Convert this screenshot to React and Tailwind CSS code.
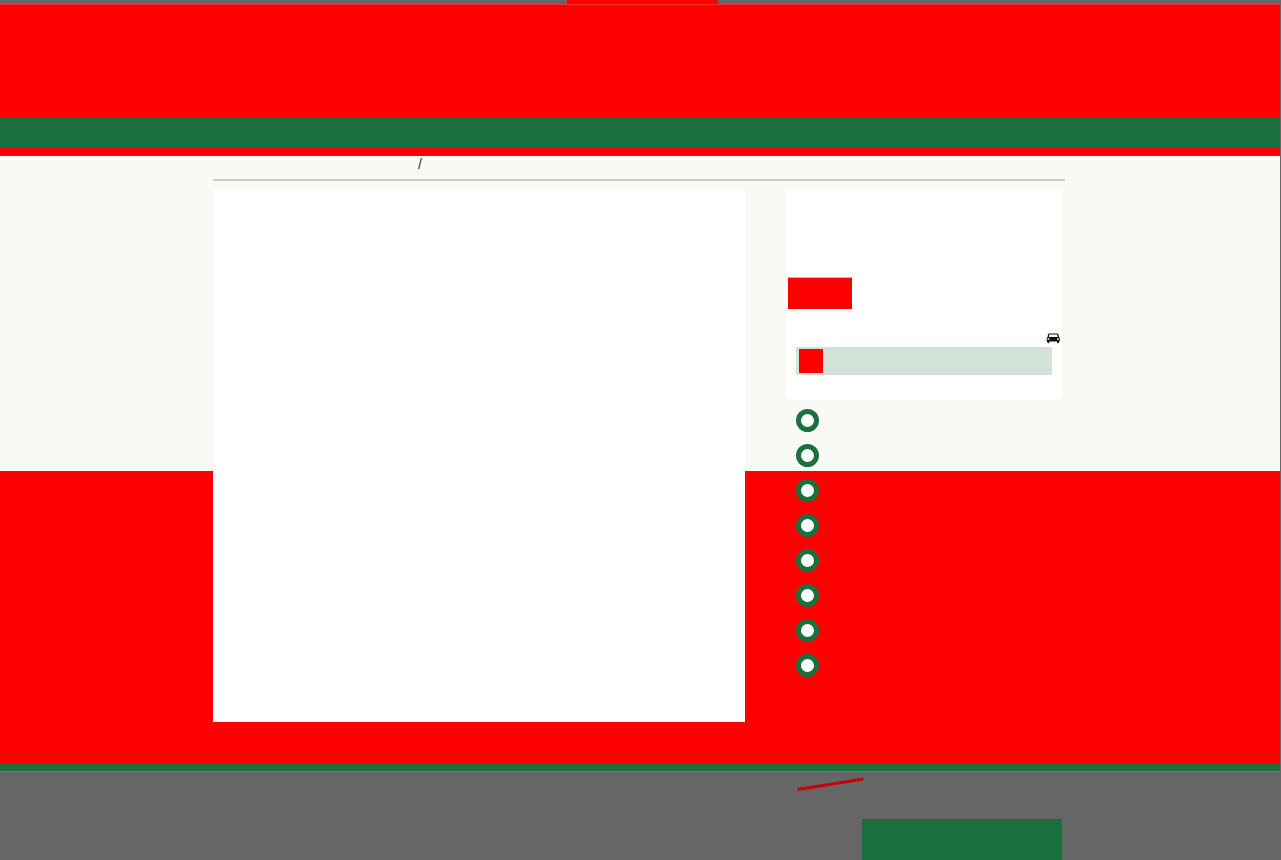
const steps = [1, 2, 3, 4, 5, 6, 7, 8];

function CarIcon() {
  return (
    <svg className="block h-[11px] w-[14px]" viewBox="0 0 14 11" aria-hidden="true">
      <path
        fillRule="evenodd"
        fill="#111"
        d="M3.2 0.5H11Q12.3 0.5 12.5 1.6L12.9 4Q13.8 4.5 13.8 5.4V8.2H13.2V9.2Q13 10.2 12 10.2Q11 10.1 11 9.2V8.4H3.4V9.2Q3.4 10.1 2.4 10.2Q1.4 10.2 1.2 9.2V8.2H0.7V5.4Q0.7 4.5 1.6 4L2 1.6Q2.2 0.5 3.2 0.5ZM3.2 1.6L2.9 4H11.6L11.2 1.6ZM1.6 5.2V6.8H3.4V5.2ZM11.1 5.2V6.8H12.9V5.2Z"
      />
    </svg>
  );
}

function Header() {
  return (
    <header className="bg-[#ff0000] pb-2">
      <div className="flex h-1 bg-[#666666] pl-1">
        <div className="mx-auto w-[151px] bg-[#ff0000]" />
      </div>
      <div className="h-px bg-[#ff3030]" />
      <div className="h-[113px]" />
      <nav className="h-[30px] bg-[#1a713f]" aria-label="Main" />
    </header>
  );
}

function Sidebar() {
  return (
    <aside className="w-[276px] shrink-0">
      <div className="bg-white pt-[86px] pb-6">
        <button type="button" aria-label="Search" className="ml-0.5 block h-8 w-16 border-t border-[#ff9999] bg-[#ff0000]" />
        <div className="mt-6 flex justify-end pr-0.5">
          <CarIcon />
        </div>
        <div className="mx-2.5 mt-[3px] flex h-7 items-center bg-[#d2e2d9] px-[3px]">
          <div className="size-6 bg-[#ff0000]" />
        </div>
      </div>
      <ul className="mt-2.5 flex flex-col gap-3 pl-2.5">
        {steps.map((step) => (
          <li key={step} className="size-[23px] rounded-full border-[5px] border-[#1a713f] bg-white" />
        ))}
      </ul>
    </aside>
  );
}

function Footer() {
  return (
    <footer className="grow border-t border-[#63806f] bg-[#666666]">
      <div className="mx-auto flex max-w-[854px] flex-col items-end pr-[5px]">
        <svg className="mt-[5px] mr-[197px] block h-[14px] w-[70px]" viewBox="0 0 70 14" aria-hidden="true">
          <path d="M2.5 12.5L68.5 2" stroke="#cc0000" strokeWidth="3" fill="none" />
        </svg>
        <div className="mt-7 h-[41px] w-[200px] bg-[#1a713f]" />
      </div>
    </footer>
  );
}

export default function App() {
  return (
    <div className="flex min-h-screen flex-col bg-[#666666] pr-px font-['Liberation_Sans',sans-serif]">
      <Header />
      <main className="border-b-[7px] border-[#1a713f] bg-[#ff0000] bg-[linear-gradient(to_bottom,#f9faf5_315px,#ff0000_315px)] pb-[42px]">
        <div className="mx-auto max-w-[854px] pr-0.5">
          <nav className="h-[25px] border-b-2 border-[#cccccc] pl-[205px] text-sm leading-4 text-[#0f3d25]" aria-label="Breadcrumb">
            /
          </nav>
          <div className="mt-2.5 flex items-start justify-between pr-[3px]">
            <article className="h-[531px] w-[532px] bg-white" />
            <Sidebar />
          </div>
        </div>
      </main>
      <Footer />
    </div>
  );
}
